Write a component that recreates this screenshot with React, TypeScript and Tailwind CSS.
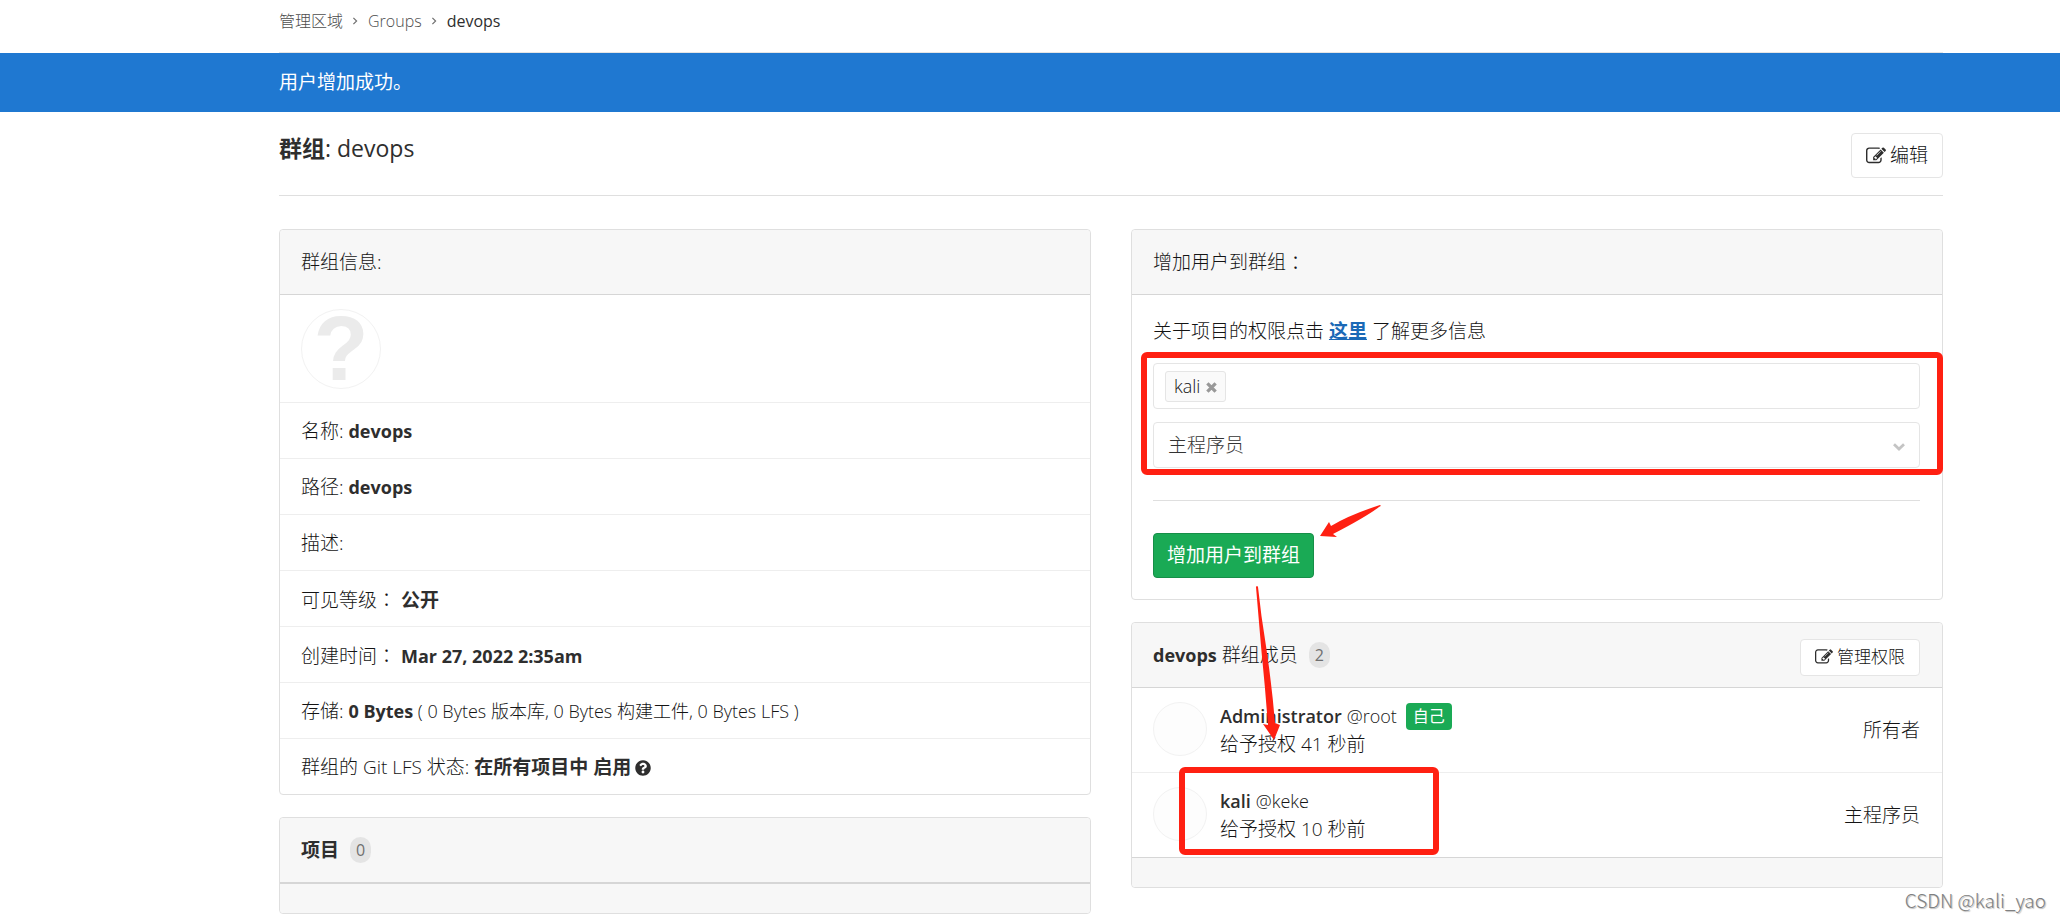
import React, { useState } from 'react';
import { FaQuestionCircle } from 'react-icons/fa';

interface CardProps {
  title: React.ReactNode;
  action?: React.ReactNode;
  footer?: boolean;
  children?: React.ReactNode;
}

interface Member {
  name: string;
  username: string;
  granted: string;
  role: string;
  isSelf?: boolean;
}

const members: Member[] = [
  { name: 'Administrator', username: '@root', granted: '给予授权 41 秒前', role: '所有者', isSelf: true },
  { name: 'kali', username: '@keke', granted: '给予授权 10 秒前', role: '主程序员' },
];

const EditIcon = ({ className }: { className: string }) => (
  <svg viewBox="0 0 1792 1792" fill="#2e2e2e" className={className} aria-hidden="true">
    <path d="M888 1184l116-116-152-152-116 116v56h96v96h56zm440-720q-16-16-33 1l-350 350q-17 17-1 33t33-1l350-350q17-17 1-33zm80 594v190q0 119-84.5 203.5t-203.5 84.5h-832q-119 0-203.5-84.5t-84.5-203.5v-832q0-119 84.5-203.5t203.5-84.5h832q63 0 117 25 15 7 18 23 3 17-9 29l-49 49q-14 14-32 8-23-6-45-6h-832q-66 0-113 47t-47 113v832q0 66 47 113t113 47h832q66 0 113-47t47-113v-126q0-13 9-22l64-64q15-15 35-7t20 29zm-96-738l288 288-672 672h-288v-288zm444 132l-92 92-288-288 92-92q28-28 68-28t68 28l152 152q28 28 28 68t-28 68z" />
  </svg>
);

const BreadcrumbArrow = () => (
  <svg viewBox="0 0 6 10" className="mr-[10px] ml-[9px] h-2 w-[6px] text-[#707070]" fill="none" stroke="currentColor" strokeWidth="1.5" aria-hidden="true">
    <path d="M1 1l4 4-4 4" />
  </svg>
);

// Full width colon, centred in its cell
const Colon = () => <span className="font-['Noto_Sans_CJK_TC',sans-serif]">：</span>;

const Count = ({ value }: { value: number }) => (
  <span className="ml-[11px] inline-flex h-[26px] items-center rounded-full bg-[#e4e4e4] px-[6px] text-base font-normal text-[#707070]">
    {value}
  </span>
);

const Card: React.FC<CardProps> = ({ title, action, footer, children }) => (
  <section className="mb-[22px] rounded border border-[#dfdfdf] bg-white">
    <header className="flex h-[65px] items-center justify-between rounded-t border-b border-[#d6d6d6] bg-[#f7f7f7] pr-[22px] pl-[21px]">
      <h2 className="flex items-center">{title}</h2>
      {action}
    </header>
    {children}
    {footer && <footer className="h-[30px] rounded-b border-t border-[#d6d6d6] bg-[#f7f7f7]" />}
  </section>
);

const InfoRow = ({ label, children }: { label: React.ReactNode; children?: React.ReactNode }) => (
  <li className="h-14 border-b border-[#eeeeee] px-[21px] leading-[56px] whitespace-pre last:h-[55px] last:border-b-0">
    {label} {children}
  </li>
);

const GroupInfo = () => (
  <Card title="群组信息:">
    <ul>
      <li className="border-b border-[#eeeeee] px-[21px] pt-[14px] pb-[13px]">
        <div className="flex h-20 w-20 items-center justify-center rounded-full border border-[#f2f2f2] font-['Liberation_Sans',sans-serif] text-[90px] leading-none font-bold text-[#ebebeb]">
          ?
        </div>
      </li>
      <InfoRow label="名称:"><strong className="text-[18px] font-bold">devops</strong></InfoRow>
      <InfoRow label="路径:"><strong className="text-[18px] font-bold">devops</strong></InfoRow>
      <InfoRow label="描述:" />
      <InfoRow label={<>可见等级<Colon /></>}><strong className="font-bold">公开</strong></InfoRow>
      <InfoRow label={<>创建时间<Colon /></>}><strong className="text-[18px] font-bold">Mar 27, 2022 2:35am</strong></InfoRow>
      <InfoRow label="存储:">
        <span className="text-[18px]"><strong className="font-bold">0 Bytes</strong> ( 0 Bytes 版本库, 0 Bytes 构建工件, 0 Bytes LFS )</span>
      </InfoRow>
      <InfoRow label="群组的 Git LFS 状态:">
        <strong className="font-bold">在所有项目中 启用</strong>
        <a href="#lfs" aria-label="Git LFS" className="ml-1 inline-block align-[-2px] text-[#2e2e2e]"><FaQuestionCircle className="h-4 w-4" /></a>
      </InfoRow>
    </ul>
  </Card>
);

const AddUserForm = () => {
  const [users, setUsers] = useState(['kali']);
  const [role, setRole] = useState('主程序员');

  return (
    <Card title={<>增加用户到群组<Colon /></>}>
      <form className="pt-[22px] pr-[22px] pb-[21px] pl-[21px]" onSubmit={(e) => e.preventDefault()}>
        <p className="mb-[18px] leading-7">
          关于项目的权限点击 <a href="#permissions" className="font-bold text-[#1b69b6] underline">这里</a> 了解更多信息
        </p>

        <div className="relative">
          <div className="mb-[13px] flex h-[46px] items-center gap-2 rounded border border-[#e5e5e5] px-[11px]">
            {users.map((user) => (
              <span key={user} className="flex h-[31px] items-center gap-[6px] rounded-[3px] border border-[#e5e5e5] bg-[#fafafa] px-2 text-[18px]">
                {user}
                <button type="button" aria-label={`移除 ${user}`} onClick={() => setUsers(users.filter((u) => u !== user))}>
                  <svg viewBox="0 0 12 12" className="mt-[2px] h-[11px] w-[11px]" stroke="#999999" strokeWidth="3.6" aria-hidden="true">
                    <path d="M1.5 1.5l9 9M10.5 1.5l-9 9" />
                  </svg>
                </button>
              </span>
            ))}
            <input type="text" aria-label="用户" className="min-w-0 flex-1 outline-none" />
          </div>

          <div className="relative">
            <select
              aria-label="角色"
              value={role}
              onChange={(e) => setRole(e.target.value)}
              className="h-[46px] w-full appearance-none rounded border border-[#e5e5e5] bg-white px-[14px] text-[#333333] outline-none"
            >
              <option>主程序员</option>
              <option>所有者</option>
            </select>
            <svg viewBox="0 0 12 8" className="pointer-events-none absolute top-[21px] right-[15px] h-2 w-3" fill="none" stroke="#c4c4c4" strokeWidth="2.8" aria-hidden="true">
              <path d="M1 1.3l5 4.7 5-4.7" />
            </svg>
          </div>

          <div className="pointer-events-none absolute -top-[11px] -right-[23px] -bottom-[7px] -left-[12px] rounded-md border-[6px] border-[#ff2012]" />
        </div>

        <hr className="mt-8 mb-8 border-[#dfdfdf]" />

        <div className="relative w-fit">
          <button type="submit" className="h-[45px] rounded border border-[#168f48] bg-[#1aaa55] px-[13px] font-normal text-white">
            增加用户到群组
          </button>
          <svg viewBox="0 0 240 240" className="pointer-events-none absolute -top-8 left-0 z-10 h-[240px] w-[240px] max-w-none" fill="#ff2012" aria-hidden="true">
            <path d="M227 4Q229 5 226 6Q213 16 180 33L184 36L167 35L176 21L178 25Q196 14 227 4Z" />
            <path d="M103 86Q104 84 105 86Q108 115 113 145Q119 185 122 222L127 224L121 239L110 223L115 224Q112 185 108 145Z" />
          </svg>
        </div>
      </form>
    </Card>
  );
};

const MemberRow: React.FC<{ member: Member }> = ({ member }) => (
  <li className="flex h-[85px] items-center border-b border-[#eeeeee] pr-[22px] pl-[21px] last:h-[84px] last:border-b-0">
    <div className="mb-[2px] h-[54px] w-[54px] rounded-full border border-[#f2f2f2] bg-[#fdfdfd]" />
    <div className="ml-[13px] flex-1 leading-7">
      <div className="flex items-center text-[18px]">
        <strong className="font-semibold">{member.name}</strong>
        <span className="ml-[5px]">{member.username}</span>
        {member.isSelf && (
          <span className="ml-[9px] flex h-[27px] items-center rounded bg-[#1aaa55] px-[7px] text-base font-normal text-white">自己</span>
        )}
      </div>
      <div>{member.granted}</div>
    </div>
    <span>{member.role}</span>
  </li>
);

const App = () => {
  return (
    <div className="overflow-x-hidden bg-white font-['Open_Sans','Noto_Sans_CJK_SC',sans-serif] text-[19px] font-light text-[#141414] [&_strong]:text-[#2e2e2e]">
      <div className="pr-[117px] pl-[279px]">
        <nav className="flex h-[53px] items-center border-b border-[#e5e5e5] pb-[10px] text-base">
          <a href="#admin" className="text-[#4d4d4d]">管理区域</a>
          <BreadcrumbArrow />
          <a href="#groups" className="text-[#4d4d4d]">Groups</a>
          <BreadcrumbArrow />
          <a href="#devops" className="font-normal text-[#2e2e2e]">devops</a>
        </nav>
      </div>

      <div role="alert" className="flex h-[59px] items-center bg-[#1f78d1] pr-[117px] pl-[279px] font-normal text-white">
        用户增加成功。
      </div>

      <main className="relative pr-[117px] pl-[279px]">
        <div className="mb-[33px] flex h-[84px] items-start justify-between border-b border-[#dfdfdf] pt-[21px]">
          <h1 className="text-[23px] leading-[30px] font-normal text-[#2e2e2e]"><strong>群组</strong>: devops</h1>
          <button type="button" className="flex h-[45px] items-center gap-1 rounded border border-[#e5e5e5] px-[14px]">
            <EditIcon className="h-5 w-5" />
            编辑
          </button>
        </div>

        <div className="grid grid-cols-2 gap-10">
          <div>
            <GroupInfo />
            <Card title={<><strong className="font-bold">项目</strong><Count value={0} /></>} footer />
          </div>
          <div>
            <AddUserForm />
            <Card
              title={<><strong className="mr-[5px] text-[18px] font-bold">devops</strong>群组成员<Count value={2} /></>}
              action={
                <button type="button" className="mt-1 flex h-[37px] items-center gap-1 rounded border border-[#e5e5e5] bg-white px-[14px] text-[17px]">
                  <EditIcon className="h-[18px] w-[18px]" />
                  管理权限
                </button>
              }
              footer
            >
              <div className="relative">
                <ul>
                  {members.map((member) => (
                    <MemberRow key={member.username} member={member} />
                  ))}
                </ul>
                <div className="pointer-events-none absolute bottom-[2px] left-[47px] h-[88px] w-[260px] rounded-md border-[6px] border-[#ff2012]" />
              </div>
            </Card>
          </div>
        </div>

        <span className="absolute right-[14px] bottom-6 font-['Noto_Sans_CJK_SC',sans-serif] text-[19px] leading-6 font-light text-[#808080] [text-shadow:1px_1px_1px_#bbbbbb]">
          CSDN @kali_yao
        </span>
      </main>
    </div>
  );
};

export default App;
